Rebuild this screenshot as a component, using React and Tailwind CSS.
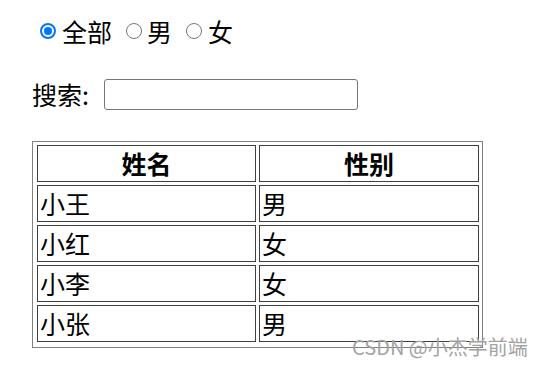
import React from "react";

function Radio({ checked }) {
  return checked ? (
    <span className="block w-[16px] h-[16px] rounded-full border-[2px] border-[#0075ff] bg-white flex items-center justify-center shrink-0">
      <span className="block w-[8px] h-[8px] rounded-full bg-[#0075ff]" />
    </span>
  ) : (
    <span className="block w-[16px] h-[16px] rounded-full border border-[#767676] bg-white shrink-0" />
  );
}

const rows = [
  ["小王", "男"],
  ["小红", "女"],
  ["小李", "女"],
  ["小张", "男"],
];

export default function App() {
  return (
    <div className="relative w-[539px] h-[366px] bg-white text-black font-['Noto_Sans_CJK_SC','Noto_Sans',sans-serif] text-[25px] leading-none pl-8 pt-4">
      <div className="flex items-center h-[30px]">
        <span className="ml-[8px]"><Radio checked /></span>
        <span className="ml-[6px]">全部</span>
        <span className="ml-[14px]"><Radio /></span>
        <span className="ml-[5px]">男</span>
        <span className="ml-[14px]"><Radio /></span>
        <span className="ml-[6px]">女</span>
      </div>
      <div className="flex items-center h-[31px] mt-[33px]">
        <span className="w-[72px]">搜索:</span>
        <div className="w-[254px] h-[31px] border border-[#767676] rounded-[3px] bg-white" />
      </div>
      <div className="mt-[31px] w-[451px] border border-[#808080] pl-[4px] pr-[3px] pt-[3px] pb-[5px]">
        <div className="grid grid-cols-[219px_220px] gap-[3px]">
          <div className="h-[37px] border border-[#404040] flex items-center justify-center font-bold">姓名</div>
          <div className="h-[37px] border border-[#404040] flex items-center justify-center font-bold">性别</div>
          {rows.map(([n, g]) => (
            <React.Fragment key={n}>
              <div className="h-[37px] border border-[#404040] flex items-center pl-[2px]">{n}</div>
              <div className="h-[37px] border border-[#404040] flex items-center pl-[2px]">{g}</div>
            </React.Fragment>
          ))}
        </div>
      </div>
      <div className="absolute left-[352px] top-[337px] text-[20px] leading-none text-[#a3a3a3]">
        CSDN @小杰学前端
      </div>
    </div>
  );
}
